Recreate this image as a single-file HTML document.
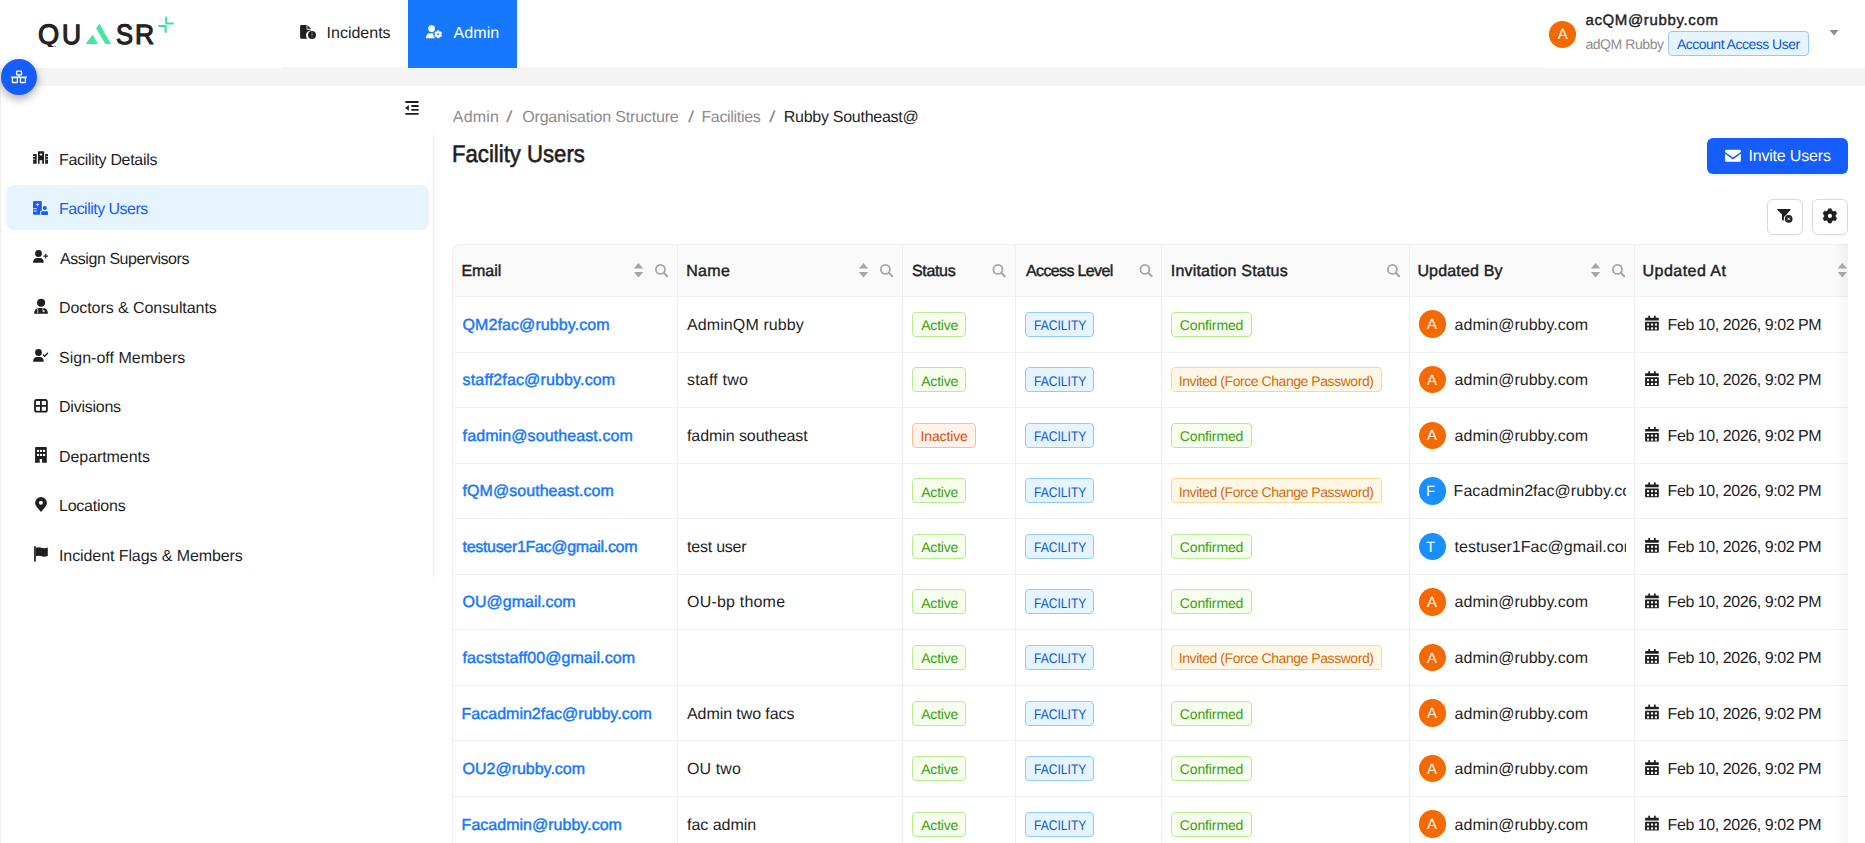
<!DOCTYPE html><html><head><meta charset="utf-8"><style>
*{margin:0;padding:0;box-sizing:border-box}
html,body{width:1865px;height:843px;overflow:hidden;background:#fff;font-family:"Liberation Sans",sans-serif;color:#1f1f1f;text-rendering:geometricPrecision}
.a{position:absolute}
.t{position:absolute;white-space:nowrap}
.tag{position:absolute;height:25px;border:1px solid;border-radius:4px}
</style></head><body><div class="a" style="left:0;top:68px;width:1865px;height:18px;background:#f4f4f4"></div>
<div class="a" style="left:282px;top:67px;width:1261px;height:1px;background:#f4f4f4"></div>
<div class="a" style="left:408px;top:0;width:109px;height:68px;background:#1677ff"></div>
<div class="a" style="left:0;top:86px;width:1px;height:757px;background:#efefef"></div>
<div class="a" style="left:1px;top:59px;width:36px;height:36px;border-radius:50%;background:#165dff;box-shadow:0 4px 10px rgba(0,0,0,0.32)"></div>
<div class="a" style="left:6px;top:185px;width:423px;height:45px;border-radius:8px;background:#e6f4ff"></div>
<div class="a" style="left:433px;top:131px;width:1px;height:450px;background:#f0f0f0"></div>
<div class="a" style="left:1707px;top:138px;width:141px;height:36px;border-radius:6px;background:#165dff;box-shadow:0 2px 0 rgba(5,145,255,0.1)"></div>
<div class="a" style="left:1767px;top:199px;width:36px;height:36px;border-radius:6px;border:1px solid #d9d9d9;background:#fff;box-shadow:0 2px 0 rgba(0,0,0,0.02)"></div>
<div class="a" style="left:1812px;top:199px;width:36px;height:36px;border-radius:6px;border:1px solid #d9d9d9;background:#fff;box-shadow:0 2px 0 rgba(0,0,0,0.02)"></div>
<div class="a" style="left:1668px;top:31px;width:141px;height:25px;border-radius:4px;border:1px solid #91caff;background:#e6f4ff"></div>
<div class="a" style="left:452px;top:244px;width:1396px;height:599px;overflow:hidden"><div class="a" style="left:0;top:0;width:1500px;height:53px;background:#fafafa;border-top-left-radius:8px;border-top-right-radius:8px"></div><div class="a" style="left:0;top:0;width:1500px;height:700px;border:1px solid #f0f0f0;border-radius:8px 8px 0 0"></div><div class="a" style="left:0;top:52px;width:1500px;height:1px;background:#f0f0f0"></div><div class="a" style="left:0;top:107.56px;width:1500px;height:1px;background:#f0f0f0"></div><div class="a" style="left:0;top:163.11px;width:1500px;height:1px;background:#f0f0f0"></div><div class="a" style="left:0;top:218.67px;width:1500px;height:1px;background:#f0f0f0"></div><div class="a" style="left:0;top:274.22px;width:1500px;height:1px;background:#f0f0f0"></div><div class="a" style="left:0;top:329.78px;width:1500px;height:1px;background:#f0f0f0"></div><div class="a" style="left:0;top:385.34px;width:1500px;height:1px;background:#f0f0f0"></div><div class="a" style="left:0;top:440.89px;width:1500px;height:1px;background:#f0f0f0"></div><div class="a" style="left:0;top:496.45px;width:1500px;height:1px;background:#f0f0f0"></div><div class="a" style="left:0;top:552.00px;width:1500px;height:1px;background:#f0f0f0"></div><div class="a" style="left:225px;top:0;width:1px;height:700px;background:#f0f0f0"></div><div class="a" style="left:450px;top:0;width:1px;height:700px;background:#f0f0f0"></div><div class="a" style="left:563px;top:0;width:1px;height:700px;background:#f0f0f0"></div><div class="a" style="left:709px;top:0;width:1px;height:700px;background:#f0f0f0"></div><div class="a" style="left:957px;top:0;width:1px;height:700px;background:#f0f0f0"></div><div class="a" style="left:1182px;top:0;width:1px;height:700px;background:#f0f0f0"></div><div class="a" style="left:1382px;top:0;width:14px;height:700px;background:linear-gradient(to right,rgba(0,0,0,0),rgba(0,0,0,0.04))"></div></div>
<div class="tag" style="left:912px;top:311.68px;width:54px;background:#f6ffed;border-color:#b7eb8f"></div>
<div class="tag" style="left:1025px;top:311.68px;width:69px;background:#e6f4ff;border-color:#91caff"></div>
<div class="tag" style="left:1171px;top:311.68px;width:81px;background:#f6ffed;border-color:#b7eb8f"></div>
<div class="tag" style="left:912px;top:367.23px;width:54px;background:#f6ffed;border-color:#b7eb8f"></div>
<div class="tag" style="left:1025px;top:367.23px;width:69px;background:#e6f4ff;border-color:#91caff"></div>
<div class="tag" style="left:1171px;top:367.23px;width:211px;background:#fff7e6;border-color:#ffd591"></div>
<div class="tag" style="left:912px;top:422.79px;width:64px;background:#fff2e8;border-color:#ffbb96"></div>
<div class="tag" style="left:1025px;top:422.79px;width:69px;background:#e6f4ff;border-color:#91caff"></div>
<div class="tag" style="left:1171px;top:422.79px;width:81px;background:#f6ffed;border-color:#b7eb8f"></div>
<div class="tag" style="left:912px;top:478.35px;width:54px;background:#f6ffed;border-color:#b7eb8f"></div>
<div class="tag" style="left:1025px;top:478.35px;width:69px;background:#e6f4ff;border-color:#91caff"></div>
<div class="tag" style="left:1171px;top:478.35px;width:211px;background:#fff7e6;border-color:#ffd591"></div>
<div class="tag" style="left:912px;top:533.90px;width:54px;background:#f6ffed;border-color:#b7eb8f"></div>
<div class="tag" style="left:1025px;top:533.90px;width:69px;background:#e6f4ff;border-color:#91caff"></div>
<div class="tag" style="left:1171px;top:533.90px;width:81px;background:#f6ffed;border-color:#b7eb8f"></div>
<div class="tag" style="left:912px;top:589.46px;width:54px;background:#f6ffed;border-color:#b7eb8f"></div>
<div class="tag" style="left:1025px;top:589.46px;width:69px;background:#e6f4ff;border-color:#91caff"></div>
<div class="tag" style="left:1171px;top:589.46px;width:81px;background:#f6ffed;border-color:#b7eb8f"></div>
<div class="tag" style="left:912px;top:645.01px;width:54px;background:#f6ffed;border-color:#b7eb8f"></div>
<div class="tag" style="left:1025px;top:645.01px;width:69px;background:#e6f4ff;border-color:#91caff"></div>
<div class="tag" style="left:1171px;top:645.01px;width:211px;background:#fff7e6;border-color:#ffd591"></div>
<div class="tag" style="left:912px;top:700.57px;width:54px;background:#f6ffed;border-color:#b7eb8f"></div>
<div class="tag" style="left:1025px;top:700.57px;width:69px;background:#e6f4ff;border-color:#91caff"></div>
<div class="tag" style="left:1171px;top:700.57px;width:81px;background:#f6ffed;border-color:#b7eb8f"></div>
<div class="tag" style="left:912px;top:756.13px;width:54px;background:#f6ffed;border-color:#b7eb8f"></div>
<div class="tag" style="left:1025px;top:756.13px;width:69px;background:#e6f4ff;border-color:#91caff"></div>
<div class="tag" style="left:1171px;top:756.13px;width:81px;background:#f6ffed;border-color:#b7eb8f"></div>
<div class="tag" style="left:912px;top:811.68px;width:54px;background:#f6ffed;border-color:#b7eb8f"></div>
<div class="tag" style="left:1025px;top:811.68px;width:69px;background:#e6f4ff;border-color:#91caff"></div>
<div class="tag" style="left:1171px;top:811.68px;width:81px;background:#f6ffed;border-color:#b7eb8f"></div>
<div class="a" style="left:1418.7px;top:310.48px;width:27.4px;height:27.4px;border-radius:50%;background:#f56a00"></div>
<div class="a" style="left:1418.7px;top:366.03px;width:27.4px;height:27.4px;border-radius:50%;background:#f56a00"></div>
<div class="a" style="left:1418.7px;top:421.59px;width:27.4px;height:27.4px;border-radius:50%;background:#f56a00"></div>
<div class="a" style="left:1418.7px;top:477.15px;width:27.4px;height:27.4px;border-radius:50%;background:#1890ff"></div>
<div class="a" style="left:1418.7px;top:532.70px;width:27.4px;height:27.4px;border-radius:50%;background:#1890ff"></div>
<div class="a" style="left:1418.7px;top:588.26px;width:27.4px;height:27.4px;border-radius:50%;background:#f56a00"></div>
<div class="a" style="left:1418.7px;top:643.81px;width:27.4px;height:27.4px;border-radius:50%;background:#f56a00"></div>
<div class="a" style="left:1418.7px;top:699.37px;width:27.4px;height:27.4px;border-radius:50%;background:#f56a00"></div>
<div class="a" style="left:1418.7px;top:754.93px;width:27.4px;height:27.4px;border-radius:50%;background:#f56a00"></div>
<div class="a" style="left:1418.7px;top:810.48px;width:27.4px;height:27.4px;border-radius:50%;background:#f56a00"></div>
<svg class="a" style="left:0;top:0" width="1865" height="843" viewBox="0 0 1865 843"><defs><clipPath id="tc"><rect x="452" y="244" width="1396" height="599"/></clipPath></defs><g fill="#212121">
</g>
<polygon points="85.6,43.9 98,43.9 92.7,34.4" fill="#44e7a1"/>
<polygon points="96.1,28.4 99.4,23.4 111,43.9 105.3,43.9" fill="#44e7a1"/>
<path d="M166.2,17.6 V23.5 H172.9 M159,26 H165.7 V32" stroke="#33e39a" stroke-width="2" fill="none" stroke-linecap="round" stroke-linejoin="round"/>
<path d="M301.3,25.1 H306.6 V29.7 H310.9 V30.4 A4.9,4.9 0 0 0 307.4,38.7 H301.3 Q300.1,38.7 300.1,37.5 V26.3 Q300.1,25.1 301.3,25.1 Z" fill="#1f1f1f"/>
<polygon points="307.4,25.2 311,28.8 307.4,28.8" fill="#1f1f1f"/>
<circle cx="312" cy="35" r="3.95" fill="#1f1f1f"/>
<rect x="311.55" y="32.5" width="0.9" height="3.2" fill="#fff" opacity="0.55"/><rect x="311.55" y="36.7" width="0.9" height="0.9" fill="#fff" opacity="0.55"/>
<circle cx="431.6" cy="28.6" r="3.4" fill="#fff"/>
<path d="M426,38.2 Q426,33.2 430.3,33.2 H433.5 Q434.6,33.2 435.4,33.6 A4.6,4.6 0 0 0 435.3,38.2 Z" fill="#fff"/>
<circle cx="438.2" cy="34.3" r="4.9" fill="#1677ff"/>
<path d="M437.08,31.62 L437.44,30.58 L438.96,30.58 L439.32,31.62 L439.96,32.00 L441.05,31.78 L441.80,33.09 L441.08,33.93 L441.08,34.67 L441.80,35.51 L441.05,36.82 L439.96,36.60 L439.32,36.98 L438.96,38.02 L437.44,38.02 L437.08,36.98 L436.44,36.60 L435.35,36.82 L434.60,35.51 L435.32,34.67 L435.32,33.93 L434.60,33.09 L435.35,31.78 L436.44,32.00 Z" fill="#fff" stroke="#fff" stroke-width="0.5" stroke-linejoin="round"/><circle cx="438.20" cy="34.30" r="1.00" fill="#1677ff"/>
<circle cx="1562.5" cy="34.4" r="13.5" fill="#f56a00"/>
<polygon points="1829.5,30 1838.5,30 1834,35.5" fill="#8c8c8c"/>
<g fill="none" stroke="#fff" stroke-width="1.3"><rect x="16.6" y="71.2" width="4.9" height="3.6" rx="0.6"/><rect x="12.4" y="77.6" width="5" height="4.9" rx="0.6"/><rect x="20.4" y="77.6" width="5" height="4.9" rx="0.6"/><path d="M19,74.8 V77"/><path d="M11.1,77.2 H26.9" stroke-width="1.4"/></g>
<g fill="#1f1f1f"><rect x="405.1" y="101.1" width="13.7" height="1.8" rx="0.8"/><rect x="411.1" y="105.1" width="7.7" height="1.8" rx="0.8"/><rect x="411.1" y="109" width="7.7" height="1.8" rx="0.8"/><rect x="405.1" y="113" width="13.7" height="1.8" rx="0.8"/><polygon points="405.1,107.9 408.9,105 408.9,110.8"/></g>
<g fill="#1f1f1f">
<rect x="33.1" y="154.1" width="3.6" height="9.7" rx="0.5"/>
<rect x="45.2" y="154.1" width="2.8" height="9.7" rx="0.5"/>
<path d="M38.5,151.3 H43.5 Q44,151.3 44,151.8 V163.8 H42.2 V160.2 H39.6 V163.8 H38 V151.8 Q38,151.3 38.5,151.3 Z"/>
</g>
<g fill="#fff"><rect x="33.1" y="156.2" width="2" height="0.8"/><rect x="33.1" y="158.8" width="2" height="0.8"/><rect x="46.2" y="156.2" width="1.8" height="0.8"/><rect x="46.2" y="158.8" width="1.8" height="0.8"/><polygon points="41,152.9 41.7,153.9 43,154.5 41.7,155.1 41,156.1 40.3,155.1 39,154.5 40.3,153.9"/></g>
<g fill="#165dff"><rect x="33" y="201" width="8.8" height="13.7" rx="1"/><circle cx="44.8" cy="208.1" r="2"/><path d="M41.2,214.7 V213 Q41.2,211.5 42.7,211.5 H46.5 Q48,211.5 48,213 V214.7 Z"/></g>
<g fill="#fff"><polygon points="37.6,202.9 38.2,204 39.3,204.6 38.2,205.2 37.6,206.3 37,205.2 35.9,204.6 37,204"/><rect x="33.4" y="208.3" width="3.5" height="0.9"/><rect x="33.4" y="210.4" width="3.5" height="1.3" opacity="0.6"/><rect x="40.2" y="210.8" width="1.5" height="4"/></g>
<g fill="#165dff"><rect x="41.2" y="211.5" width="6.8" height="3.2" rx="0.8"/></g>
<g fill="#1f1f1f"><circle cx="38.5" cy="253.5" r="3.4"/><path d="M33.1,262.8 Q33.1,258.1 37.3,258.1 H39.6 Q43.8,258.1 43.8,262.8 Z"/></g>
<path d="M45.7,253.9 V258.3 M43.5,256.1 H47.9" stroke="#1f1f1f" stroke-width="1.2"/>
<g fill="#1f1f1f"><circle cx="41.1" cy="302.8" r="4"/><path d="M34.1,313.8 Q34.1,308.1 39.5,308.1 H42.5 Q47.9,308.1 47.9,313.8 Z"/></g>
<g fill="#fff" opacity="0.85"><rect x="37" y="308.5" width="1.3" height="4.5" opacity="0.7"/><circle cx="43.6" cy="311.2" r="1.1"/><rect x="42.4" y="308.1" width="0.8" height="2"/></g>
<g fill="#1f1f1f"><circle cx="38.5" cy="352.5" r="3.4"/><path d="M33.1,361.8 Q33.1,357.1 37.3,357.1 H39.6 Q43.8,357.1 43.8,361.8 Z"/></g>
<path d="M43.4,355 L44.7,356.2 L47.6,353.3" stroke="#1f1f1f" stroke-width="1.4" fill="none" stroke-linecap="round"/>
<g fill="none" stroke="#1f1f1f" stroke-width="1.8"><rect x="35" y="400" width="11.9" height="11.6" rx="1.7"/><path d="M40.9,399.9 V411.7 M34.9,405.8 H47"/></g>
<path d="M36.1,447 H45.8 Q46.8,447 46.8,448 V462.7 H42.1 V459 H39.7 V462.7 H35.1 V448 Q35.1,447 36.1,447 Z" fill="#1f1f1f"/>
<g fill="#fff"><rect x="37.0" y="449.9" width="2.1" height="2.1"/><rect x="37.0" y="453.9" width="2.1" height="2.1"/><rect x="40.0" y="449.9" width="2.1" height="2.1"/><rect x="40.0" y="453.9" width="2.1" height="2.1"/><rect x="43.0" y="449.9" width="2.1" height="2.1"/><rect x="43.0" y="453.9" width="2.1" height="2.1"/></g>
<path d="M41,511.9 C38.5,509 35.1,505.5 35.1,502.9 A5.9,5.9 0 0 1 46.9,502.9 C46.9,505.5 43.5,509 41,511.9 Z" fill="#1f1f1f"/>
<circle cx="40.9" cy="502.8" r="2" fill="#fff"/>
<rect x="34.1" y="546" width="1.7" height="15.7" rx="0.8" fill="#1f1f1f"/>
<path d="M35.8,547.8 Q38.5,546.8 41.5,547.8 Q44.5,548.8 47.8,547.5 V556 Q44.5,557.3 41.5,556.3 Q38.5,555.3 35.8,556.3 Z" fill="#1f1f1f"/>
<path d="M1726.3,149.8 H1739.6 Q1740.9,149.8 1740.9,151.2 V151.9 L1733,157.6 L1725,151.9 V151.2 Q1725,149.8 1726.3,149.8 Z" fill="#fff"/>
<path d="M1725,153.7 L1733,159.5 L1740.9,153.7 V160.4 Q1740.9,161.8 1739.6,161.8 H1726.3 Q1725,161.8 1725,160.4 Z" fill="#fff"/>
<path d="M1777.6,209.1 H1790.4 Q1791,209.1 1790.6,209.7 L1786.1,215 A4.6,4.6 0 0 0 1784.3,220.8 L1782,219.7 V214.5 L1777.2,209.7 Q1777,209.1 1777.6,209.1 Z" fill="#1f1f1f"/>
<circle cx="1788.7" cy="218.9" r="3.8" fill="#1f1f1f"/>
<path d="M1787.3,217.5 L1790.1,220.3 M1790.1,217.5 L1787.3,220.3" stroke="#fff" stroke-width="0.9"/>
<path d="M1827.79,210.71 L1828.47,208.74 L1831.33,208.74 L1832.01,210.71 L1833.34,211.48 L1835.39,211.08 L1836.81,213.56 L1835.45,215.13 L1835.45,216.67 L1836.81,218.24 L1835.39,220.72 L1833.34,220.32 L1832.01,221.09 L1831.33,223.06 L1828.47,223.06 L1827.79,221.09 L1826.46,220.32 L1824.41,220.72 L1822.99,218.24 L1824.35,216.67 L1824.35,215.13 L1822.99,213.56 L1824.41,211.08 L1826.46,211.48 Z" fill="#1f1f1f" stroke="#1f1f1f" stroke-width="0.5" stroke-linejoin="round"/><circle cx="1829.90" cy="215.90" r="2.10" fill="#fff"/><g clip-path="url(#tc)"><polygon points="633.9,268.5 643.2,268.5 638.5,262.9" fill="#a6a6a6"/>
<polygon points="633.9,272 643.2,272 638.5,277.4" fill="#a6a6a6"/>
<polygon points="858.9,268.5 868.2,268.5 863.5,262.9" fill="#a6a6a6"/>
<polygon points="858.9,272 868.2,272 863.5,277.4" fill="#a6a6a6"/>
<polygon points="1590.9,268.5 1600.2,268.5 1595.6,262.9" fill="#a6a6a6"/>
<polygon points="1590.9,272 1600.2,272 1595.6,277.4" fill="#a6a6a6"/>
<polygon points="1837.7,268.5 1847.0,268.5 1842.4,262.9" fill="#a6a6a6"/>
<polygon points="1837.7,272 1847.0,272 1842.4,277.4" fill="#a6a6a6"/>
<circle cx="660.4" cy="269.4" r="4.5" fill="none" stroke="#a6a6a6" stroke-width="1.8"/>
<path d="M663.8,272.8 L667.2,276.2" stroke="#a6a6a6" stroke-width="2" stroke-linecap="round"/>
<circle cx="885.4" cy="269.4" r="4.5" fill="none" stroke="#a6a6a6" stroke-width="1.8"/>
<path d="M888.8,272.8 L892.2,276.2" stroke="#a6a6a6" stroke-width="2" stroke-linecap="round"/>
<circle cx="997.9" cy="269.4" r="4.5" fill="none" stroke="#a6a6a6" stroke-width="1.8"/>
<path d="M1001.3,272.8 L1004.7,276.2" stroke="#a6a6a6" stroke-width="2" stroke-linecap="round"/>
<circle cx="1144.9" cy="269.4" r="4.5" fill="none" stroke="#a6a6a6" stroke-width="1.8"/>
<path d="M1148.3,272.8 L1151.7,276.2" stroke="#a6a6a6" stroke-width="2" stroke-linecap="round"/>
<circle cx="1392.4" cy="269.4" r="4.5" fill="none" stroke="#a6a6a6" stroke-width="1.8"/>
<path d="M1395.8,272.8 L1399.2,276.2" stroke="#a6a6a6" stroke-width="2" stroke-linecap="round"/>
<circle cx="1617.4" cy="269.4" r="4.5" fill="none" stroke="#a6a6a6" stroke-width="1.8"/>
<path d="M1620.8,272.8 L1624.2,276.2" stroke="#a6a6a6" stroke-width="2" stroke-linecap="round"/><g transform="translate(0 -0.32)"><rect x="1645.1" y="318.1" width="13.7" height="2.7" rx="0.6" fill="#1f1f1f"/><rect x="1648.3" y="316" width="1.7" height="3" fill="#1f1f1f"/><rect x="1654" y="316" width="1.7" height="3" fill="#1f1f1f"/><rect x="1645.1" y="322.1" width="13.7" height="8.7" rx="0.6" fill="#1f1f1f"/><rect x="1647.0" y="323.8" width="2.1" height="2.1" fill="#fff"/><rect x="1647.0" y="327.7" width="2.1" height="2.1" fill="#fff"/><rect x="1651.0" y="323.8" width="2.1" height="2.1" fill="#fff"/><rect x="1651.0" y="327.7" width="2.1" height="2.1" fill="#fff"/><rect x="1654.9" y="323.8" width="2.1" height="2.1" fill="#fff"/><rect x="1654.9" y="327.7" width="2.1" height="2.1" fill="#fff"/></g><g transform="translate(0 55.23)"><rect x="1645.1" y="318.1" width="13.7" height="2.7" rx="0.6" fill="#1f1f1f"/><rect x="1648.3" y="316" width="1.7" height="3" fill="#1f1f1f"/><rect x="1654" y="316" width="1.7" height="3" fill="#1f1f1f"/><rect x="1645.1" y="322.1" width="13.7" height="8.7" rx="0.6" fill="#1f1f1f"/><rect x="1647.0" y="323.8" width="2.1" height="2.1" fill="#fff"/><rect x="1647.0" y="327.7" width="2.1" height="2.1" fill="#fff"/><rect x="1651.0" y="323.8" width="2.1" height="2.1" fill="#fff"/><rect x="1651.0" y="327.7" width="2.1" height="2.1" fill="#fff"/><rect x="1654.9" y="323.8" width="2.1" height="2.1" fill="#fff"/><rect x="1654.9" y="327.7" width="2.1" height="2.1" fill="#fff"/></g><g transform="translate(0 110.79)"><rect x="1645.1" y="318.1" width="13.7" height="2.7" rx="0.6" fill="#1f1f1f"/><rect x="1648.3" y="316" width="1.7" height="3" fill="#1f1f1f"/><rect x="1654" y="316" width="1.7" height="3" fill="#1f1f1f"/><rect x="1645.1" y="322.1" width="13.7" height="8.7" rx="0.6" fill="#1f1f1f"/><rect x="1647.0" y="323.8" width="2.1" height="2.1" fill="#fff"/><rect x="1647.0" y="327.7" width="2.1" height="2.1" fill="#fff"/><rect x="1651.0" y="323.8" width="2.1" height="2.1" fill="#fff"/><rect x="1651.0" y="327.7" width="2.1" height="2.1" fill="#fff"/><rect x="1654.9" y="323.8" width="2.1" height="2.1" fill="#fff"/><rect x="1654.9" y="327.7" width="2.1" height="2.1" fill="#fff"/></g><g transform="translate(0 166.35)"><rect x="1645.1" y="318.1" width="13.7" height="2.7" rx="0.6" fill="#1f1f1f"/><rect x="1648.3" y="316" width="1.7" height="3" fill="#1f1f1f"/><rect x="1654" y="316" width="1.7" height="3" fill="#1f1f1f"/><rect x="1645.1" y="322.1" width="13.7" height="8.7" rx="0.6" fill="#1f1f1f"/><rect x="1647.0" y="323.8" width="2.1" height="2.1" fill="#fff"/><rect x="1647.0" y="327.7" width="2.1" height="2.1" fill="#fff"/><rect x="1651.0" y="323.8" width="2.1" height="2.1" fill="#fff"/><rect x="1651.0" y="327.7" width="2.1" height="2.1" fill="#fff"/><rect x="1654.9" y="323.8" width="2.1" height="2.1" fill="#fff"/><rect x="1654.9" y="327.7" width="2.1" height="2.1" fill="#fff"/></g><g transform="translate(0 221.90)"><rect x="1645.1" y="318.1" width="13.7" height="2.7" rx="0.6" fill="#1f1f1f"/><rect x="1648.3" y="316" width="1.7" height="3" fill="#1f1f1f"/><rect x="1654" y="316" width="1.7" height="3" fill="#1f1f1f"/><rect x="1645.1" y="322.1" width="13.7" height="8.7" rx="0.6" fill="#1f1f1f"/><rect x="1647.0" y="323.8" width="2.1" height="2.1" fill="#fff"/><rect x="1647.0" y="327.7" width="2.1" height="2.1" fill="#fff"/><rect x="1651.0" y="323.8" width="2.1" height="2.1" fill="#fff"/><rect x="1651.0" y="327.7" width="2.1" height="2.1" fill="#fff"/><rect x="1654.9" y="323.8" width="2.1" height="2.1" fill="#fff"/><rect x="1654.9" y="327.7" width="2.1" height="2.1" fill="#fff"/></g><g transform="translate(0 277.46)"><rect x="1645.1" y="318.1" width="13.7" height="2.7" rx="0.6" fill="#1f1f1f"/><rect x="1648.3" y="316" width="1.7" height="3" fill="#1f1f1f"/><rect x="1654" y="316" width="1.7" height="3" fill="#1f1f1f"/><rect x="1645.1" y="322.1" width="13.7" height="8.7" rx="0.6" fill="#1f1f1f"/><rect x="1647.0" y="323.8" width="2.1" height="2.1" fill="#fff"/><rect x="1647.0" y="327.7" width="2.1" height="2.1" fill="#fff"/><rect x="1651.0" y="323.8" width="2.1" height="2.1" fill="#fff"/><rect x="1651.0" y="327.7" width="2.1" height="2.1" fill="#fff"/><rect x="1654.9" y="323.8" width="2.1" height="2.1" fill="#fff"/><rect x="1654.9" y="327.7" width="2.1" height="2.1" fill="#fff"/></g><g transform="translate(0 333.01)"><rect x="1645.1" y="318.1" width="13.7" height="2.7" rx="0.6" fill="#1f1f1f"/><rect x="1648.3" y="316" width="1.7" height="3" fill="#1f1f1f"/><rect x="1654" y="316" width="1.7" height="3" fill="#1f1f1f"/><rect x="1645.1" y="322.1" width="13.7" height="8.7" rx="0.6" fill="#1f1f1f"/><rect x="1647.0" y="323.8" width="2.1" height="2.1" fill="#fff"/><rect x="1647.0" y="327.7" width="2.1" height="2.1" fill="#fff"/><rect x="1651.0" y="323.8" width="2.1" height="2.1" fill="#fff"/><rect x="1651.0" y="327.7" width="2.1" height="2.1" fill="#fff"/><rect x="1654.9" y="323.8" width="2.1" height="2.1" fill="#fff"/><rect x="1654.9" y="327.7" width="2.1" height="2.1" fill="#fff"/></g><g transform="translate(0 388.57)"><rect x="1645.1" y="318.1" width="13.7" height="2.7" rx="0.6" fill="#1f1f1f"/><rect x="1648.3" y="316" width="1.7" height="3" fill="#1f1f1f"/><rect x="1654" y="316" width="1.7" height="3" fill="#1f1f1f"/><rect x="1645.1" y="322.1" width="13.7" height="8.7" rx="0.6" fill="#1f1f1f"/><rect x="1647.0" y="323.8" width="2.1" height="2.1" fill="#fff"/><rect x="1647.0" y="327.7" width="2.1" height="2.1" fill="#fff"/><rect x="1651.0" y="323.8" width="2.1" height="2.1" fill="#fff"/><rect x="1651.0" y="327.7" width="2.1" height="2.1" fill="#fff"/><rect x="1654.9" y="323.8" width="2.1" height="2.1" fill="#fff"/><rect x="1654.9" y="327.7" width="2.1" height="2.1" fill="#fff"/></g><g transform="translate(0 444.13)"><rect x="1645.1" y="318.1" width="13.7" height="2.7" rx="0.6" fill="#1f1f1f"/><rect x="1648.3" y="316" width="1.7" height="3" fill="#1f1f1f"/><rect x="1654" y="316" width="1.7" height="3" fill="#1f1f1f"/><rect x="1645.1" y="322.1" width="13.7" height="8.7" rx="0.6" fill="#1f1f1f"/><rect x="1647.0" y="323.8" width="2.1" height="2.1" fill="#fff"/><rect x="1647.0" y="327.7" width="2.1" height="2.1" fill="#fff"/><rect x="1651.0" y="323.8" width="2.1" height="2.1" fill="#fff"/><rect x="1651.0" y="327.7" width="2.1" height="2.1" fill="#fff"/><rect x="1654.9" y="323.8" width="2.1" height="2.1" fill="#fff"/><rect x="1654.9" y="327.7" width="2.1" height="2.1" fill="#fff"/></g><g transform="translate(0 499.68)"><rect x="1645.1" y="318.1" width="13.7" height="2.7" rx="0.6" fill="#1f1f1f"/><rect x="1648.3" y="316" width="1.7" height="3" fill="#1f1f1f"/><rect x="1654" y="316" width="1.7" height="3" fill="#1f1f1f"/><rect x="1645.1" y="322.1" width="13.7" height="8.7" rx="0.6" fill="#1f1f1f"/><rect x="1647.0" y="323.8" width="2.1" height="2.1" fill="#fff"/><rect x="1647.0" y="327.7" width="2.1" height="2.1" fill="#fff"/><rect x="1651.0" y="323.8" width="2.1" height="2.1" fill="#fff"/><rect x="1651.0" y="327.7" width="2.1" height="2.1" fill="#fff"/><rect x="1654.9" y="323.8" width="2.1" height="2.1" fill="#fff"/><rect x="1654.9" y="327.7" width="2.1" height="2.1" fill="#fff"/></g></g></svg>
<div class="t" id="nav_inc" style="left:326.60px;top:22.50px;font-size:16px;line-height:21px;color:#1f1f1f;letter-spacing:-0.008px">Incidents</div>
<div class="t" id="nav_adm" style="left:453.60px;top:22.50px;font-size:16px;line-height:21px;color:#fff;letter-spacing:0.075px">Admin</div>
<div class="t" id="u_mail" style="left:1585.40px;top:10.70px;font-size:15px;line-height:20px;color:#1f1f1f;letter-spacing:0.650px;-webkit-text-stroke:0.42px #1f1f1f">acQM@rubby.com</div>
<div class="t" id="u_name" style="left:1585.40px;top:34.80px;font-size:14px;line-height:18px;color:#8c8c8c;letter-spacing:-0.423px">adQM Rubby</div>
<div class="t" id="u_tag" style="left:1677.00px;top:34.80px;font-size:14px;line-height:18px;color:#0958d9;letter-spacing:-0.511px">Account Access User</div>
<div class="t" id="logo_Q" style="left:38.00px;top:17.00px;font-size:28px;line-height:36px;color:#222222;letter-spacing:0.000px;transform:scaleX(0.9721);transform-origin:0 50%;-webkit-text-stroke:1.2px #222222">Q</div>
<div class="t" id="logo_U" style="left:62.30px;top:17.00px;font-size:28px;line-height:36px;color:#222222;letter-spacing:0.000px;transform:scaleX(0.9401);transform-origin:0 50%;-webkit-text-stroke:1.2px #222222">U</div>
<div class="t" id="logo_S" style="left:115.60px;top:17.00px;font-size:28px;line-height:36px;color:#222222;letter-spacing:0.000px;transform:scaleX(0.9107);transform-origin:0 50%;-webkit-text-stroke:1.2px #222222">S</div>
<div class="t" id="logo_R" style="left:135.00px;top:17.00px;font-size:28px;line-height:36px;color:#222222;letter-spacing:0.000px;transform:scaleX(0.9434);transform-origin:0 50%;-webkit-text-stroke:1.2px #222222">R</div>
<div class="t" id="bc1" style="left:452.80px;top:107.20px;font-size:16px;line-height:21px;color:#8c8c8c;letter-spacing:0.200px">Admin</div>
<div class="t" id="bcs1" style="left:506.40px;top:107.20px;font-size:16px;line-height:21px;color:#8c8c8c;letter-spacing:0.000px;transform:scaleX(1.4597);transform-origin:0 50%">/</div>
<div class="t" id="bc2" style="left:522.20px;top:107.20px;font-size:16px;line-height:21px;color:#8c8c8c;letter-spacing:-0.167px">Organisation Structure</div>
<div class="t" id="bcs2" style="left:687.80px;top:107.20px;font-size:16px;line-height:21px;color:#8c8c8c;letter-spacing:0.000px;transform:scaleX(1.3861);transform-origin:0 50%">/</div>
<div class="t" id="bc3" style="left:701.40px;top:107.20px;font-size:16px;line-height:21px;color:#8c8c8c;letter-spacing:-0.318px">Facilities</div>
<div class="t" id="bcs3" style="left:769.20px;top:107.20px;font-size:16px;line-height:21px;color:#8c8c8c;letter-spacing:0.000px;transform:scaleX(1.4597);transform-origin:0 50%">/</div>
<div class="t" id="bc4" style="left:783.80px;top:107.20px;font-size:16px;line-height:21px;color:#1f1f1f;letter-spacing:-0.276px">Rubby Southeast@</div>
<div class="t" id="title" style="left:451.60px;top:138.60px;font-size:24px;line-height:31px;color:#1f1f1f;letter-spacing:0.000px;transform:scaleX(0.9225);transform-origin:0 50%;-webkit-text-stroke:0.6px #1f1f1f">Facility Users</div>
<div class="t" id="invite" style="left:1748.40px;top:145.80px;font-size:16px;line-height:21px;color:#fff;letter-spacing:-0.176px">Invite Users</div>
<div class="t" id="sb0" style="left:59.00px;top:149.75px;font-size:16px;line-height:21px;color:#1f1f1f;letter-spacing:-0.316px">Facility Details</div>
<div class="t" id="sb1" style="left:59.00px;top:199.10px;font-size:16px;line-height:21px;color:#165dff;letter-spacing:-0.519px">Facility Users</div>
<div class="t" id="sb2" style="left:60.00px;top:248.80px;font-size:16px;line-height:21px;color:#1f1f1f;letter-spacing:-0.440px">Assign Supervisors</div>
<div class="t" id="sb3" style="left:59.00px;top:298.00px;font-size:16px;line-height:21px;color:#1f1f1f;letter-spacing:-0.070px">Doctors &amp; Consultants</div>
<div class="t" id="sb4" style="left:59.00px;top:347.90px;font-size:16px;line-height:21px;color:#1f1f1f;letter-spacing:0.018px">Sign-off Members</div>
<div class="t" id="sb5" style="left:59.00px;top:396.70px;font-size:16px;line-height:21px;color:#1f1f1f;letter-spacing:-0.242px">Divisions</div>
<div class="t" id="sb6" style="left:59.00px;top:447.00px;font-size:16px;line-height:21px;color:#1f1f1f;letter-spacing:-0.070px">Departments</div>
<div class="t" id="sb7" style="left:59.00px;top:495.80px;font-size:16px;line-height:21px;color:#1f1f1f;letter-spacing:-0.233px">Locations</div>
<div class="t" id="sb8" style="left:59.00px;top:545.50px;font-size:16px;line-height:21px;color:#1f1f1f;letter-spacing:-0.087px">Incident Flags &amp; Members</div>
<div class="t" id="h_email" style="left:461.40px;top:261.10px;font-size:16px;line-height:21px;color:#1f1f1f;letter-spacing:-0.050px;-webkit-text-stroke:0.45px #1f1f1f">Email</div>
<div class="t" id="h_name" style="left:686.20px;top:261.10px;font-size:16px;line-height:21px;color:#1f1f1f;letter-spacing:0.333px;-webkit-text-stroke:0.45px #1f1f1f">Name</div>
<div class="t" id="h_status" style="left:912.00px;top:261.10px;font-size:16px;line-height:21px;color:#1f1f1f;letter-spacing:-0.340px;-webkit-text-stroke:0.45px #1f1f1f">Status</div>
<div class="t" id="h_access" style="left:1026.00px;top:261.10px;font-size:16px;line-height:21px;color:#1f1f1f;letter-spacing:-0.637px;-webkit-text-stroke:0.45px #1f1f1f">Access Level</div>
<div class="t" id="h_inv" style="left:1170.80px;top:261.10px;font-size:16px;line-height:21px;color:#1f1f1f;letter-spacing:0.187px;-webkit-text-stroke:0.45px #1f1f1f">Invitation Status</div>
<div class="t" id="h_upby" style="left:1417.40px;top:261.10px;font-size:16px;line-height:21px;color:#1f1f1f;letter-spacing:0.169px;-webkit-text-stroke:0.45px #1f1f1f">Updated By</div>
<div class="t" id="h_upat" style="left:1642.60px;top:261.10px;font-size:16px;line-height:21px;color:#1f1f1f;letter-spacing:0.452px;-webkit-text-stroke:0.45px #1f1f1f">Updated At</div>
<div class="t" id="em0" style="left:462.60px;top:314.68px;font-size:16px;line-height:21px;color:#1677ff;letter-spacing:0.082px;-webkit-text-stroke:0.45px #1677ff">QM2fac@rubby.com</div>
<div class="t" id="nm0" style="left:687.00px;top:314.68px;font-size:16px;line-height:21px;color:#1f1f1f;letter-spacing:0.103px">AdminQM rubby</div>
<div class="t" id="tg0_Active" style="left:921.20px;top:315.98px;font-size:14px;line-height:18px;color:#389e0d;letter-spacing:-0.200px">Active</div>
<div class="t" id="tg0_FACILITY" style="left:1033.60px;top:315.98px;font-size:14px;line-height:18px;color:#0958d9;letter-spacing:0.000px;transform:scaleX(0.8623);transform-origin:0 50%">FACILITY</div>
<div class="t" id="tg0_Confirmed" style="left:1179.80px;top:315.98px;font-size:14px;line-height:18px;color:#389e0d;letter-spacing:-0.125px">Confirmed</div>
<div class="a" style="left:0;top:0;width:1626px;height:843px;overflow:hidden"><div class="t" id="ub0" style="left:1454.60px;top:314.68px;font-size:16px;line-height:21px;color:#1f1f1f;letter-spacing:0.008px">admin@rubby.com</div></div>
<div class="t" id="ua0" style="left:1667.60px;top:314.68px;font-size:16px;line-height:21px;color:#1f1f1f;letter-spacing:-0.435px">Feb 10, 2026, 9:02 PM</div>
<div class="t" id="em1" style="left:462.60px;top:370.23px;font-size:16px;line-height:21px;color:#1677ff;letter-spacing:0.147px;-webkit-text-stroke:0.45px #1677ff">staff2fac@rubby.com</div>
<div class="t" id="nm1" style="left:687.00px;top:370.23px;font-size:16px;line-height:21px;color:#1f1f1f;letter-spacing:0.188px">staff two</div>
<div class="t" id="tg1_Active" style="left:921.20px;top:371.53px;font-size:14px;line-height:18px;color:#389e0d;letter-spacing:-0.200px">Active</div>
<div class="t" id="tg1_FACILITY" style="left:1033.60px;top:371.53px;font-size:14px;line-height:18px;color:#0958d9;letter-spacing:0.000px;transform:scaleX(0.8623);transform-origin:0 50%">FACILITY</div>
<div class="t" id="tg1_Invited" style="left:1178.80px;top:371.53px;font-size:14px;line-height:18px;color:#d46b08;letter-spacing:-0.447px">Invited (Force Change Password)</div>
<div class="a" style="left:0;top:0;width:1626px;height:843px;overflow:hidden"><div class="t" id="ub1" style="left:1454.60px;top:370.23px;font-size:16px;line-height:21px;color:#1f1f1f;letter-spacing:0.008px">admin@rubby.com</div></div>
<div class="t" id="ua1" style="left:1667.60px;top:370.23px;font-size:16px;line-height:21px;color:#1f1f1f;letter-spacing:-0.435px">Feb 10, 2026, 9:02 PM</div>
<div class="t" id="em2" style="left:462.60px;top:425.79px;font-size:16px;line-height:21px;color:#1677ff;letter-spacing:0.101px;-webkit-text-stroke:0.45px #1677ff">fadmin@southeast.com</div>
<div class="t" id="nm2" style="left:687.00px;top:425.79px;font-size:16px;line-height:21px;color:#1f1f1f;letter-spacing:-0.077px">fadmin southeast</div>
<div class="t" id="tg2_Inactive" style="left:920.60px;top:427.09px;font-size:14px;line-height:18px;color:#d4500a;letter-spacing:-0.145px">Inactive</div>
<div class="t" id="tg2_FACILITY" style="left:1033.60px;top:427.09px;font-size:14px;line-height:18px;color:#0958d9;letter-spacing:0.000px;transform:scaleX(0.8623);transform-origin:0 50%">FACILITY</div>
<div class="t" id="tg2_Confirmed" style="left:1179.80px;top:427.09px;font-size:14px;line-height:18px;color:#389e0d;letter-spacing:-0.125px">Confirmed</div>
<div class="a" style="left:0;top:0;width:1626px;height:843px;overflow:hidden"><div class="t" id="ub2" style="left:1454.60px;top:425.79px;font-size:16px;line-height:21px;color:#1f1f1f;letter-spacing:0.008px">admin@rubby.com</div></div>
<div class="t" id="ua2" style="left:1667.60px;top:425.79px;font-size:16px;line-height:21px;color:#1f1f1f;letter-spacing:-0.435px">Feb 10, 2026, 9:02 PM</div>
<div class="t" id="em3" style="left:462.60px;top:481.35px;font-size:16px;line-height:21px;color:#1677ff;letter-spacing:0.044px;-webkit-text-stroke:0.45px #1677ff">fQM@southeast.com</div>
<div class="t" id="tg3_Active" style="left:921.20px;top:482.65px;font-size:14px;line-height:18px;color:#389e0d;letter-spacing:-0.200px">Active</div>
<div class="t" id="tg3_FACILITY" style="left:1033.60px;top:482.65px;font-size:14px;line-height:18px;color:#0958d9;letter-spacing:0.000px;transform:scaleX(0.8623);transform-origin:0 50%">FACILITY</div>
<div class="t" id="tg3_Invited" style="left:1178.80px;top:482.65px;font-size:14px;line-height:18px;color:#d46b08;letter-spacing:-0.447px">Invited (Force Change Password)</div>
<div class="a" style="left:0;top:0;width:1626px;height:843px;overflow:hidden"><div class="t" id="ub3" style="left:1453.60px;top:481.35px;font-size:16px;line-height:21px;color:#1f1f1f;letter-spacing:0.037px">Facadmin2fac@rubby.com</div></div>
<div class="t" id="ua3" style="left:1667.60px;top:481.35px;font-size:16px;line-height:21px;color:#1f1f1f;letter-spacing:-0.435px">Feb 10, 2026, 9:02 PM</div>
<div class="t" id="em4" style="left:462.60px;top:536.90px;font-size:16px;line-height:21px;color:#1677ff;letter-spacing:-0.321px;-webkit-text-stroke:0.45px #1677ff">testuser1Fac@gmail.com</div>
<div class="t" id="nm4" style="left:687.00px;top:536.90px;font-size:16px;line-height:21px;color:#1f1f1f;letter-spacing:-0.217px">test user</div>
<div class="t" id="tg4_Active" style="left:921.20px;top:538.20px;font-size:14px;line-height:18px;color:#389e0d;letter-spacing:-0.200px">Active</div>
<div class="t" id="tg4_FACILITY" style="left:1033.60px;top:538.20px;font-size:14px;line-height:18px;color:#0958d9;letter-spacing:0.000px;transform:scaleX(0.8623);transform-origin:0 50%">FACILITY</div>
<div class="t" id="tg4_Confirmed" style="left:1179.80px;top:538.20px;font-size:14px;line-height:18px;color:#389e0d;letter-spacing:-0.125px">Confirmed</div>
<div class="a" style="left:0;top:0;width:1626px;height:843px;overflow:hidden"><div class="t" id="ub4" style="left:1454.60px;top:536.90px;font-size:16px;line-height:21px;color:#1f1f1f;letter-spacing:0.037px">testuser1Fac@gmail.com</div></div>
<div class="t" id="ua4" style="left:1667.60px;top:536.90px;font-size:16px;line-height:21px;color:#1f1f1f;letter-spacing:-0.435px">Feb 10, 2026, 9:02 PM</div>
<div class="t" id="em5" style="left:462.60px;top:592.46px;font-size:16px;line-height:21px;color:#1677ff;letter-spacing:-0.012px;-webkit-text-stroke:0.45px #1677ff">OU@gmail.com</div>
<div class="t" id="nm5" style="left:687.00px;top:592.46px;font-size:16px;line-height:21px;color:#1f1f1f;letter-spacing:0.200px">OU-bp thome</div>
<div class="t" id="tg5_Active" style="left:921.20px;top:593.76px;font-size:14px;line-height:18px;color:#389e0d;letter-spacing:-0.200px">Active</div>
<div class="t" id="tg5_FACILITY" style="left:1033.60px;top:593.76px;font-size:14px;line-height:18px;color:#0958d9;letter-spacing:0.000px;transform:scaleX(0.8623);transform-origin:0 50%">FACILITY</div>
<div class="t" id="tg5_Confirmed" style="left:1179.80px;top:593.76px;font-size:14px;line-height:18px;color:#389e0d;letter-spacing:-0.125px">Confirmed</div>
<div class="a" style="left:0;top:0;width:1626px;height:843px;overflow:hidden"><div class="t" id="ub5" style="left:1454.60px;top:592.46px;font-size:16px;line-height:21px;color:#1f1f1f;letter-spacing:0.008px">admin@rubby.com</div></div>
<div class="t" id="ua5" style="left:1667.60px;top:592.46px;font-size:16px;line-height:21px;color:#1f1f1f;letter-spacing:-0.435px">Feb 10, 2026, 9:02 PM</div>
<div class="t" id="em6" style="left:462.60px;top:648.01px;font-size:16px;line-height:21px;color:#1677ff;letter-spacing:0.084px;-webkit-text-stroke:0.45px #1677ff">facststaff00@gmail.com</div>
<div class="t" id="tg6_Active" style="left:921.20px;top:649.31px;font-size:14px;line-height:18px;color:#389e0d;letter-spacing:-0.200px">Active</div>
<div class="t" id="tg6_FACILITY" style="left:1033.60px;top:649.31px;font-size:14px;line-height:18px;color:#0958d9;letter-spacing:0.000px;transform:scaleX(0.8623);transform-origin:0 50%">FACILITY</div>
<div class="t" id="tg6_Invited" style="left:1178.80px;top:649.31px;font-size:14px;line-height:18px;color:#d46b08;letter-spacing:-0.447px">Invited (Force Change Password)</div>
<div class="a" style="left:0;top:0;width:1626px;height:843px;overflow:hidden"><div class="t" id="ub6" style="left:1454.60px;top:648.01px;font-size:16px;line-height:21px;color:#1f1f1f;letter-spacing:0.008px">admin@rubby.com</div></div>
<div class="t" id="ua6" style="left:1667.60px;top:648.01px;font-size:16px;line-height:21px;color:#1f1f1f;letter-spacing:-0.435px">Feb 10, 2026, 9:02 PM</div>
<div class="t" id="em7" style="left:461.60px;top:703.57px;font-size:16px;line-height:21px;color:#1677ff;letter-spacing:0.001px;-webkit-text-stroke:0.45px #1677ff">Facadmin2fac@rubby.com</div>
<div class="t" id="nm7" style="left:687.00px;top:703.57px;font-size:16px;line-height:21px;color:#1f1f1f;letter-spacing:-0.077px">Admin two facs</div>
<div class="t" id="tg7_Active" style="left:921.20px;top:704.87px;font-size:14px;line-height:18px;color:#389e0d;letter-spacing:-0.200px">Active</div>
<div class="t" id="tg7_FACILITY" style="left:1033.60px;top:704.87px;font-size:14px;line-height:18px;color:#0958d9;letter-spacing:0.000px;transform:scaleX(0.8623);transform-origin:0 50%">FACILITY</div>
<div class="t" id="tg7_Confirmed" style="left:1179.80px;top:704.87px;font-size:14px;line-height:18px;color:#389e0d;letter-spacing:-0.125px">Confirmed</div>
<div class="a" style="left:0;top:0;width:1626px;height:843px;overflow:hidden"><div class="t" id="ub7" style="left:1454.60px;top:703.57px;font-size:16px;line-height:21px;color:#1f1f1f;letter-spacing:0.008px">admin@rubby.com</div></div>
<div class="t" id="ua7" style="left:1667.60px;top:703.57px;font-size:16px;line-height:21px;color:#1f1f1f;letter-spacing:-0.435px">Feb 10, 2026, 9:02 PM</div>
<div class="t" id="em8" style="left:462.60px;top:759.13px;font-size:16px;line-height:21px;color:#1677ff;letter-spacing:-0.017px;-webkit-text-stroke:0.45px #1677ff">OU2@rubby.com</div>
<div class="t" id="nm8" style="left:687.00px;top:759.13px;font-size:16px;line-height:21px;color:#1f1f1f;letter-spacing:0.100px">OU two</div>
<div class="t" id="tg8_Active" style="left:921.20px;top:760.43px;font-size:14px;line-height:18px;color:#389e0d;letter-spacing:-0.200px">Active</div>
<div class="t" id="tg8_FACILITY" style="left:1033.60px;top:760.43px;font-size:14px;line-height:18px;color:#0958d9;letter-spacing:0.000px;transform:scaleX(0.8623);transform-origin:0 50%">FACILITY</div>
<div class="t" id="tg8_Confirmed" style="left:1179.80px;top:760.43px;font-size:14px;line-height:18px;color:#389e0d;letter-spacing:-0.125px">Confirmed</div>
<div class="a" style="left:0;top:0;width:1626px;height:843px;overflow:hidden"><div class="t" id="ub8" style="left:1454.60px;top:759.13px;font-size:16px;line-height:21px;color:#1f1f1f;letter-spacing:0.008px">admin@rubby.com</div></div>
<div class="t" id="ua8" style="left:1667.60px;top:759.13px;font-size:16px;line-height:21px;color:#1f1f1f;letter-spacing:-0.435px">Feb 10, 2026, 9:02 PM</div>
<div class="t" id="em9" style="left:461.60px;top:814.68px;font-size:16px;line-height:21px;color:#1677ff;letter-spacing:0.020px;-webkit-text-stroke:0.45px #1677ff">Facadmin@rubby.com</div>
<div class="t" id="nm9" style="left:687.00px;top:814.68px;font-size:16px;line-height:21px;color:#1f1f1f;letter-spacing:-0.017px">fac admin</div>
<div class="t" id="tg9_Active" style="left:921.20px;top:815.98px;font-size:14px;line-height:18px;color:#389e0d;letter-spacing:-0.200px">Active</div>
<div class="t" id="tg9_FACILITY" style="left:1033.60px;top:815.98px;font-size:14px;line-height:18px;color:#0958d9;letter-spacing:0.000px;transform:scaleX(0.8623);transform-origin:0 50%">FACILITY</div>
<div class="t" id="tg9_Confirmed" style="left:1179.80px;top:815.98px;font-size:14px;line-height:18px;color:#389e0d;letter-spacing:-0.125px">Confirmed</div>
<div class="a" style="left:0;top:0;width:1626px;height:843px;overflow:hidden"><div class="t" id="ub9" style="left:1454.60px;top:814.68px;font-size:16px;line-height:21px;color:#1f1f1f;letter-spacing:0.008px">admin@rubby.com</div></div>
<div class="t" id="ua9" style="left:1667.60px;top:814.68px;font-size:16px;line-height:21px;color:#1f1f1f;letter-spacing:-0.435px">Feb 10, 2026, 9:02 PM</div>
<div class="t" id="av0" style="left:1427.00px;top:315.38px;font-size:15px;line-height:20px;color:#fff;letter-spacing:0.000px">A</div>
<div class="t" id="av1" style="left:1427.00px;top:370.93px;font-size:15px;line-height:20px;color:#fff;letter-spacing:0.000px">A</div>
<div class="t" id="av2" style="left:1427.00px;top:426.49px;font-size:15px;line-height:20px;color:#fff;letter-spacing:0.000px">A</div>
<div class="t" id="av3" style="left:1426.00px;top:482.05px;font-size:15px;line-height:20px;color:#fff;letter-spacing:0.000px">F</div>
<div class="t" id="av4" style="left:1426.00px;top:537.60px;font-size:15px;line-height:20px;color:#fff;letter-spacing:0.000px">T</div>
<div class="t" id="av5" style="left:1427.00px;top:593.16px;font-size:15px;line-height:20px;color:#fff;letter-spacing:0.000px">A</div>
<div class="t" id="av6" style="left:1427.00px;top:648.71px;font-size:15px;line-height:20px;color:#fff;letter-spacing:0.000px">A</div>
<div class="t" id="av7" style="left:1427.00px;top:704.27px;font-size:15px;line-height:20px;color:#fff;letter-spacing:0.000px">A</div>
<div class="t" id="av8" style="left:1427.00px;top:759.83px;font-size:15px;line-height:20px;color:#fff;letter-spacing:0.000px">A</div>
<div class="t" id="av9" style="left:1427.00px;top:815.38px;font-size:15px;line-height:20px;color:#fff;letter-spacing:0.000px">A</div>
<div class="t" id="hav" style="left:1557.80px;top:24.50px;font-size:15px;line-height:20px;color:#fff;letter-spacing:0.000px">A</div>
<div class="a" style="left:36px;top:47px;width:26px;height:6px;background:#fff"></div></body></html>
